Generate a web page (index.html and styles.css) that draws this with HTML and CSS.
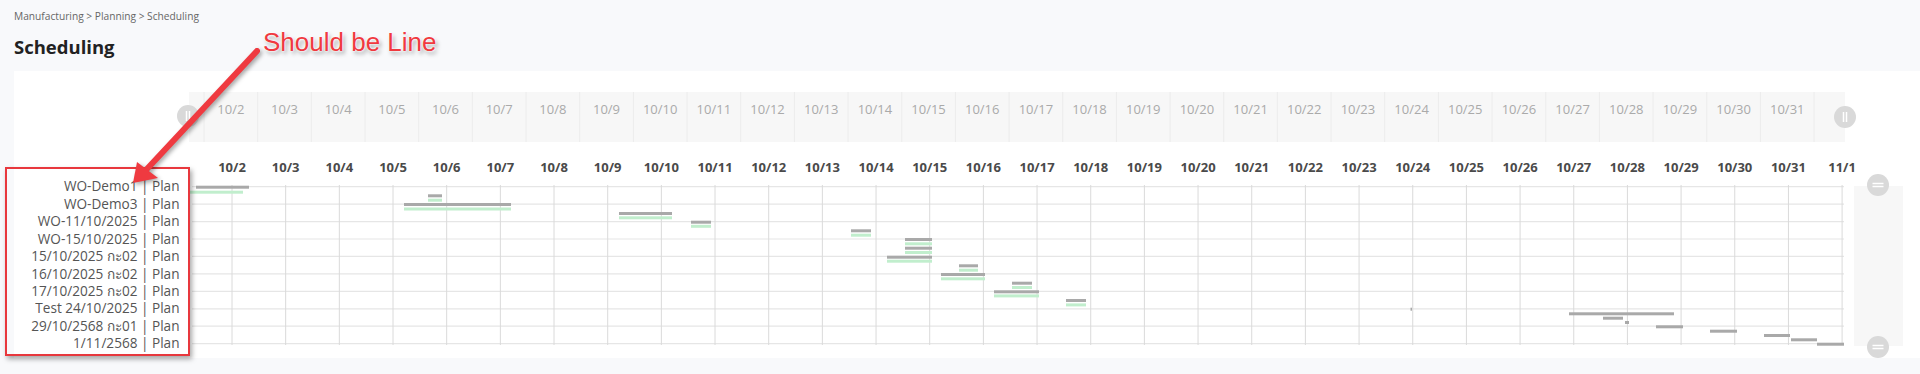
FILE: index.html
```html
<!DOCTYPE html>
<html lang="en">
<head>
    <meta charset="UTF-8">
    <meta name="viewport" content="width=device-width, initial-scale=1.0">
    <title>Scheduling</title>
    <link rel="stylesheet" href="styles.css">
</head>
<body>

    <div class="breadcrumb">Manufacturing &gt; Planning &gt; Scheduling</div>
    <h1 class="page-title">Scheduling</h1>

    <!-- Gantt chart -->
    <div class="card">
        <svg id="gantt" class="gantt" viewBox="14 71 1906 287" width="1906" height="287"></svg>
    </div>

    <!-- Review note drawn over the chart -->
    <div class="note-box"></div>
    <svg class="note-arrow" width="300" height="200" viewBox="0 0 300 200">
        <line x1="257" y1="51" x2="146" y2="170" />
        <polygon points="133,183 137,162 158,178" />
    </svg>
    <span class="note-text">Should be Line</span>

    <script src="script.js"></script>
</body>
</html>
```

FILE: styles.css
```css
/* General Styles */
body {
    margin: 0;
    padding: 9px 0 0 14px;
    font-family: 'Open Sans', 'Noto Sans', sans-serif;
    background: #f8f9fb;
    color: #333;
    position: relative;
    height: 365px;
    overflow: hidden;
}

.breadcrumb {
    font-size: 10.2px;
    line-height: 14px;
    color: #666;
}

.page-title {
    margin: 12px 0 12px 0;
    font-size: 18.5px;
    line-height: 24px;
    font-weight: 700;
    color: #222;
}

/* Chart card */
.card {
    background: #fff;
    height: 287px;
}

.gantt {
    display: block;
    font-family: 'Open Sans', 'Noto Sans', sans-serif;
    font-size: 13px;
}

.gantt .slider-band {
    fill: #f7f7f7;
}

.gantt .slider-cell {
    stroke: #ececec;
    stroke-width: 1;
}

.gantt .slider-label {
    fill: #aaa;
    text-anchor: middle;
}

.gantt .tick-label {
    fill: #4a4a4a;
    font-weight: 700;
    text-anchor: middle;
}

.gantt .grid-v {
    stroke: #dadada;
    stroke-width: 1;
}

.gantt .grid-h {
    stroke: #e6e6e6;
    stroke-width: 1.2;
}

.gantt .row-label {
    fill: #555;
    font-size: 13.6px;
    text-anchor: end;
}

.gantt .bar-plan {
    fill: #a9a9a9;
}

.gantt .bar-actual {
    fill: #c1eecd;
}

.gantt .handle {
    fill: #d9d9d9;
}

.gantt .handle-grip {
    stroke: #fff;
    stroke-width: 1.5;
}

/* Annotation */
.note-box {
    position: absolute;
    left: 5px;
    top: 167px;
    width: 181px;
    height: 185px;
    border: 2.5px solid #e8383d;
    box-shadow: 2px 3px 5px rgba(0, 0, 0, 0.35);
}

.note-arrow {
    position: absolute;
    left: 0;
    top: 0;
    filter: drop-shadow(2px 2px 2px rgba(0, 0, 0, 0.35));
}

.note-arrow line {
    stroke: #ef3a40;
    stroke-width: 6;
    stroke-linecap: round;
}

.note-arrow polygon {
    fill: #ef3a40;
}

.note-text {
    position: absolute;
    left: 263px;
    top: 27px;
    font-family: 'Liberation Sans', Arial, sans-serif;
    font-size: 26px;
    line-height: 30px;
    color: #f0393f;
    text-shadow: 0 0 2px #fff, 0 0 2px #fff, 2px 3px 4px rgba(0, 0, 0, 0.35);
}
```

FILE: script.js
```js
const NS = "http://www.w3.org/2000/svg";
const svg = document.getElementById("gantt");

function add(tag, attrs, text) {
    const el = document.createElementNS(NS, tag);
    for (const key in attrs) el.setAttribute(key, attrs[key]);
    if (text) el.textContent = text;
    svg.appendChild(el);
    return el;
}

// Dates on the x axis: 10/2 .. 11/1
const DAY = 53.67;
const X0 = 232;
const days = [];
for (let d = 2; d <= 31; d++) days.push("10/" + d);
days.push("11/1");

const rows = [
    "WO-Demo1 | Plan",
    "WO-Demo3 | Plan",
    "WO-11/10/2025 | Plan",
    "WO-15/10/2025 | Plan",
    "15/10/2025 กะ02 | Plan",
    "16/10/2025 กะ02 | Plan",
    "17/10/2025 กะ02 | Plan",
    "Test 24/10/2025 | Plan",
    "29/10/2568 กะ01 | Plan",
    "1/11/2568 | Plan"
];
const ROW_Y = 186.7;
const ROW_H = 17.44;

// Plan (gray) bars: [start x, end x, top y]
const planBars = [
    [196, 249, 185.7], [428, 442, 194.3], [404, 511, 203], [619, 672, 212],
    [691, 711, 220.7], [851, 871, 229.3], [905, 932, 238], [905, 932, 246.7],
    [887, 932, 255.7], [959, 978, 264.3], [941, 985, 273], [1012, 1032, 281.7],
    [994, 1039, 290.3], [1066, 1086, 299], [1410.5, 1412, 307.7], [1569, 1674, 312.3],
    [1603, 1623, 316.7], [1625, 1629, 321], [1656, 1683, 325.3], [1710, 1737, 329.7],
    [1764, 1790, 334], [1791, 1817, 338.3], [1817, 1844, 342.7]
];

// Actual (green) bars
const actualBars = [
    [190, 243, 190.7], [428, 442, 198.7], [404, 511, 207.5], [619, 672, 216.3],
    [691, 711, 224.8], [851, 871, 233.7], [905, 932, 242.3], [905, 932, 251],
    [887, 932, 259.7], [959, 978, 268.7], [941, 985, 277.3], [1012, 1032, 286],
    [994, 1039, 294.4], [1066, 1086, 303.4]
];

// Range slider on top
add("rect", { class: "slider-band", x: 189, y: 92, width: 1656, height: 50 });
for (let k = 0; k <= 30; k++) {
    const x = 204 + k * DAY;
    add("line", { class: "slider-cell", x1: x, y1: 92, x2: x, y2: 142 });
    if (k < 30) add("text", { class: "slider-label", x: x + DAY / 2, y: 114 }, days[k]);
}

// Grid and tick labels
rows.forEach((label, i) => {
    const y = ROW_Y + i * ROW_H;
    add("line", { class: "grid-h", x1: 192, y1: y, x2: 1844, y2: y });
    add("text", { class: "row-label", x: 179.5, y: y + 4.7 }, label);
});

days.forEach((day, k) => {
    const x = X0 + k * DAY;
    add("line", { class: "grid-v", x1: x, y1: 185, x2: x, y2: 345 });
    add("text", { class: "tick-label", x: x, y: 172 }, day);
});

planBars.forEach(b => add("rect", { class: "bar-plan", x: b[0], y: b[2], width: b[1] - b[0], height: 3 }));
actualBars.forEach(b => add("rect", { class: "bar-actual", x: b[0], y: b[2], width: b[1] - b[0], height: 3 }));

// Range slider on the right
add("rect", { class: "slider-band", x: 1854, y: 186, width: 49, height: 160 });

function handle(cx, cy, vertical) {
    add("circle", { class: "handle", cx: cx, cy: cy, r: 11 });
    if (vertical) {
        add("line", { class: "handle-grip", x1: cx - 1.5, y1: cy - 5, x2: cx - 1.5, y2: cy + 5 });
        add("line", { class: "handle-grip", x1: cx + 1.5, y1: cy - 5, x2: cx + 1.5, y2: cy + 5 });
    } else {
        add("line", { class: "handle-grip", x1: cx - 5.5, y1: cy - 1.5, x2: cx + 5.5, y2: cy - 1.5 });
        add("line", { class: "handle-grip", x1: cx - 5.5, y1: cy + 1.5, x2: cx + 5.5, y2: cy + 1.5 });
    }
}

handle(188, 116, true);
handle(1845, 117, true);
handle(1878, 185, false);
handle(1878, 347, false);
```
